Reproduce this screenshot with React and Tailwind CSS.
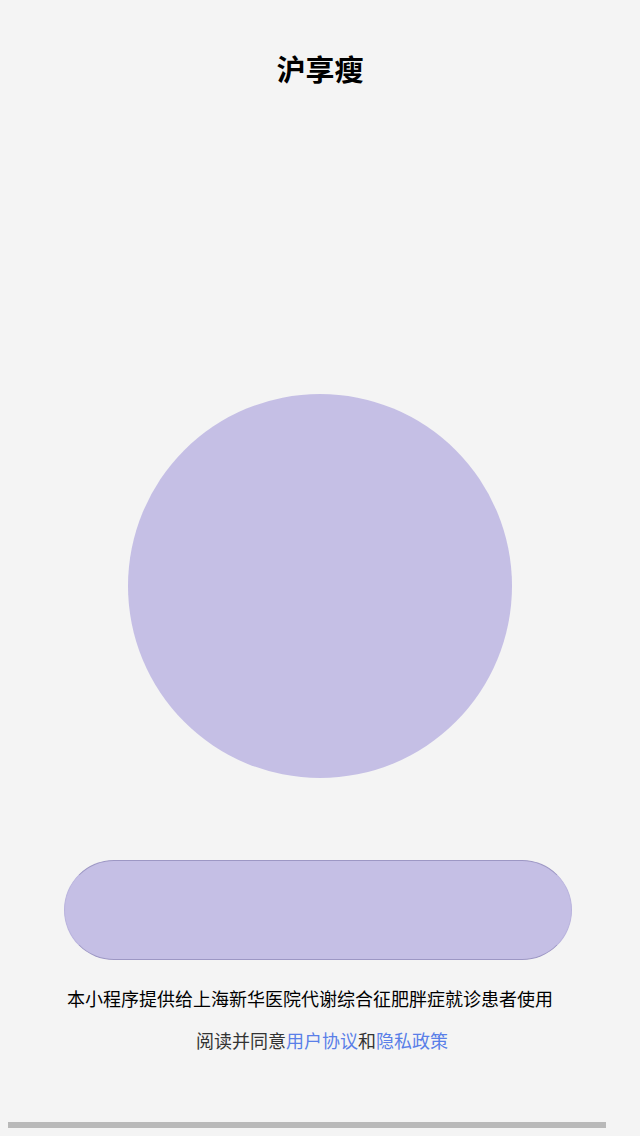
import React from 'react';

const FONT = { fontFamily: '"Noto Sans CJK SC", "Noto Sans", sans-serif' };

export default function App() {
  return (
    <div className="min-h-[1136px] w-[640px] bg-[#f4f4f4] flex flex-col" style={FONT}>
      <h1 className="pt-[50px] text-center text-[29px] leading-[36px] font-bold text-black">沪享瘦</h1>

      <div className="mt-[308px] mx-auto w-[384px] h-[384px] rounded-full bg-[#c5bfe5]" />

      <button className="mt-[82px] ml-[64px] w-[508px] h-[100px] rounded-full bg-[#c5bfe5] border border-y-[#9d97c4] border-x-[#b9b3dd]" />

      <p className="mt-[26px] ml-[67px] text-[18px] leading-[24px] text-black">
        本小程序提供给上海新华医院代谢综合征肥胖症就诊患者使用
      </p>

      <p className="mt-[18px] pl-[4px] text-center text-[18px] leading-[24px] text-[#333]">
        阅读并同意<span className="text-[#5a7fe8]">用户协议</span>和<span className="text-[#5a7fe8]">隐私政策</span>
      </p>

      <div className="mt-[70px] ml-[8px] w-[598px] h-[6px] bg-[#b9b9b9]" />
    </div>
  );
}
